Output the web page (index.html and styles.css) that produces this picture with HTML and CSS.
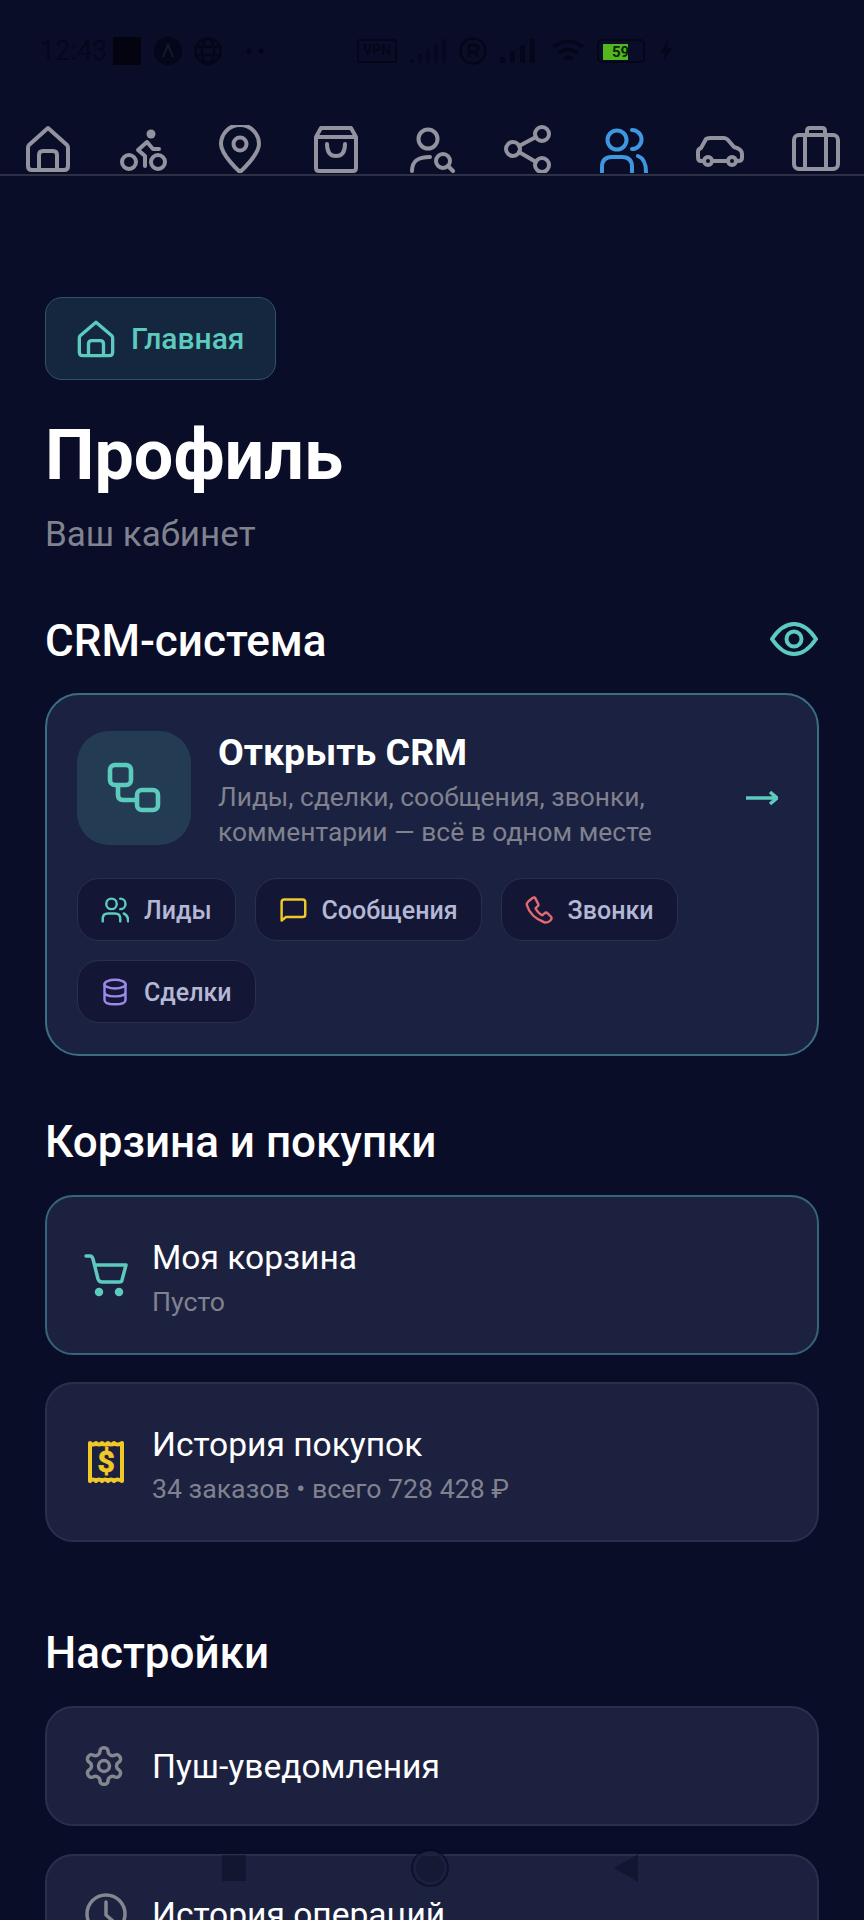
FILE: index.html
```html
<!DOCTYPE html>
<html lang="ru">
<head>
	<meta charset="UTF-8">
	<title>Профиль</title>
	<link rel="stylesheet" href="styles.css">
</head>
<body>
<!-- status bar -->
<div class="status">
	<span class="status-time">12:43</span>
	<span class="status-square"></span>
	<svg class="status-a" width="28" height="28" viewBox="0 0 28 28"><circle cx="14" cy="14" r="14" fill="#04061a"/><path d="M9 20 L14 8 L19 20" fill="none" stroke="#14172e" stroke-width="2"/></svg>
	<svg class="status-globe" width="28" height="28" viewBox="0 0 28 28" fill="none" stroke="#04061a" stroke-width="2.5"><circle cx="14" cy="14" r="12.5"/><ellipse cx="14" cy="14" rx="6" ry="12.5"/><path d="M2 10 H26 M2 18 H26"/></svg>
	<svg class="status-dots" width="18" height="6" viewBox="0 0 18 6" fill="#04061a"><circle cx="3" cy="3" r="2.5"/><circle cx="15" cy="3" r="2.5"/></svg>
	<span class="status-vpn">VPN</span>
	<svg class="status-signal" width="38" height="24" viewBox="0 0 38 24" fill="#04061a" opacity="0.7"><rect x="0" y="20" width="4" height="4"/><rect x="8" y="15" width="4" height="9"/><rect x="16" y="10" width="4" height="14"/><rect x="24" y="5" width="4" height="19"/><rect x="32" y="0" width="4" height="24"/></svg>
	<svg class="status-r" width="28" height="28" viewBox="0 0 28 28" fill="none" stroke="#04061a" stroke-width="2.5"><circle cx="14" cy="14" r="12.5"/><path d="M10 20 V8 H16 A3.5 3.5 0 0 1 16 15 H10 M15 15 L19 20"/></svg>
	<svg class="status-signal2" width="36" height="24" viewBox="0 0 36 24" fill="#04061a"><rect x="0" y="18" width="5" height="6"/><rect x="10" y="12" width="5" height="12"/><rect x="20" y="6" width="5" height="18"/><rect x="30" y="0" width="5" height="24"/></svg>
	<svg class="status-wifi" width="34" height="24" viewBox="0 0 34 24" fill="none" stroke="#04061a" stroke-width="3.5"><path d="M2 8 Q16 -3 31 8"/><path d="M7 14 Q16 7 26 14"/><path d="M12 20 Q16 17 21 20"/></svg>
	<span class="status-battery"><span class="battery-fill">59</span></span>
	<svg class="status-bolt" width="12" height="22" viewBox="0 0 12 22" fill="#04061a"><path d="M8 0 L0 13 H5 L3 22 L12 8 H7 Z"/></svg>
</div>

<!-- top tabs -->
<nav class="tabs">
	<svg class="tab" viewBox="0 0 48 48"><path d="M24 3 L5 20 Q4 21 4 23 V41 Q4 45 8 45 H40 Q44 45 44 41 V23 Q44 21 43 20 Z"/><path d="M15 45 V30 Q15 26 19 26 H29 Q33 26 33 30 V45"/></svg>
	<svg class="tab" viewBox="0 0 48 48"><circle cx="9" cy="37" r="7"/><circle cx="38" cy="37" r="7"/><circle class="tab-fill" cx="31" cy="9" r="4.5"/><path d="M27 17 L18 25 L25 31 V41 M27 17 L33 24 H39"/></svg>
	<svg class="tab" viewBox="0 0 48 48"><path d="M24 47 C24 47 5 30 5 19 A19 19 0 0 1 43 19 C43 30 24 47 24 47 Z"/><circle cx="24" cy="19" r="6.5"/></svg>
	<svg class="tab" viewBox="0 0 48 48"><path d="M4 12 L9 3 H39 L44 12 V43 Q44 46 41 46 H7 Q4 46 4 43 Z M4 12 H44"/><path d="M15 19 Q15 31 24 31 Q33 31 33 19"/></svg>
	<svg class="tab" viewBox="0 0 48 48"><circle cx="20" cy="14" r="9.5"/><path d="M4 46 C4 36 10 32 22 32"/><circle cx="35" cy="36" r="7"/><path d="M40 41 L45 46"/></svg>
	<svg class="tab" viewBox="0 0 48 48"><circle cx="38" cy="9" r="7"/><circle cx="9" cy="24" r="7"/><circle cx="38" cy="40" r="7"/><path d="M15 21 L32 12 M15 27 L32 37"/></svg>
	<svg class="tab tab-on" viewBox="0 0 48 48"><circle cx="17" cy="15" r="9.5"/><path d="M32 5 A9.5 9.5 0 0 1 32 24"/><path d="M2 47 V42 Q2 32 12 32 H22 Q32 32 32 42 V47"/><path d="M38 31 Q46 34 46 47"/></svg>
	<svg class="tab" viewBox="0 0 48 48"><path d="M8 36 H5 Q2 36 2 32 V27 Q2 24 5 23 L10 14 Q11 13 14 13 H28 Q30 13 32 15 L38 22 Q46 24 46 29 V33 Q46 36 42 36 H40 M16 36 H32"/><circle cx="12" cy="36" r="4"/><circle cx="36" cy="36" r="4"/></svg>
	<svg class="tab" viewBox="0 0 48 48"><rect x="2" y="10" width="44" height="34" rx="5"/><path d="M13 10 V44 M34 10 V44 M15 10 V6 Q15 3 18 3 H30 Q33 3 33 6 V10"/></svg>
</nav>

<section class="page">
	<a class="home-link">
		<svg class="home-icon" viewBox="0 0 48 48"><path d="M24 4 L5 20 Q4 21 4 23 V40 Q4 44 8 44 H40 Q44 44 44 40 V23 Q44 21 43 20 Z"/><path d="M15 44 V30 Q15 26 19 26 H29 Q33 26 33 30 V44"/></svg>
		Главная
	</a>
	<h1 class="page-title">Профиль</h1>
	<p class="page-sub">Ваш кабинет</p>

	<div class="section-head">
		<h2>CRM-система</h2>
		<svg class="eye" viewBox="0 0 48 36"><path d="M2 18 Q12 3 24 3 Q36 3 46 18 Q36 33 24 33 Q12 33 2 18 Z"/><circle cx="24" cy="18" r="7.5"/></svg>
	</div>

	<div class="crm">
		<div class="crm-top">
			<div class="crm-logo">
				<svg width="60" height="60" viewBox="0 0 60 60"><rect x="6" y="7" width="21" height="20" rx="5"/><rect x="33" y="32" width="21" height="20" rx="5"/><path d="M14 27 V37 Q14 42 19 42 H33"/></svg>
			</div>
			<div class="crm-text">
				<h3>Открыть CRM</h3>
				<p>Лиды, сделки, сообщения, звонки, комментарии — всё в одном месте</p>
			</div>
			<svg class="crm-arrow" width="32" height="20" viewBox="0 0 32 20"><path d="M0 10 H30 M24 4 L31 10 L24 16"/></svg>
		</div>
		<div class="chips">
			<span class="chip">
				<svg class="teal" viewBox="0 0 32 32"><circle cx="12" cy="9" r="6"/><path d="M22 3 A6 6 0 0 1 22 15"/><path d="M2 29 V26 Q2 20 8 20 H16 Q22 20 22 26 V29"/><path d="M26 20 Q31 22 31 29"/></svg>
				<span class="chip-label">Лиды</span>
			</span>
			<span class="chip">
				<svg class="yellow" viewBox="0 0 32 32"><path d="M3 28 V7 Q3 4 6 4 H27 Q30 4 30 7 V21 Q30 24 27 24 H8 Z"/></svg>
				<span class="chip-label">Сообщения</span>
			</span>
			<span class="chip">
				<svg class="red" viewBox="0 0 32 32"><path d="M4 6 L9 2 Q11 1 12 3 L15 9 Q16 11 14 12 L12 14 Q15 20 20 22 L22 20 Q24 18 26 20 L30 24 Q31 26 29 28 Q26 31 22 30 Q6 24 2 10 Q2 8 4 6 Z"/></svg>
				<span class="chip-label">Звонки</span>
			</span>
			<span class="chip">
				<svg class="purple" viewBox="0 0 32 32"><ellipse cx="16" cy="7" rx="12" ry="5"/><path d="M4 7 V25 Q4 30 16 30 Q28 30 28 25 V7 M4 16 Q4 21 16 21 Q28 21 28 16"/></svg>
				<span class="chip-label">Сделки</span>
			</span>
		</div>
	</div>

	<h2 class="buy-title">Корзина и покупки</h2>
	<div class="row row-lit">
		<svg class="row-icon teal" viewBox="0 0 44 44"><path d="M2 3 H6 Q8 3 9 6 L14 26 Q15 29 18 29 H35 Q38 29 38 27 L42 12 H11"/><circle class="dot" cx="15" cy="39" r="2.5"/><circle class="dot" cx="35" cy="39" r="2.5"/></svg>
		<div class="row-body">
			<div class="row-title">Моя корзина</div>
			<div class="row-sub">Пусто</div>
		</div>
	</div>
	<div class="row">
		<svg class="row-icon yellow receipt" viewBox="0 0 44 44"><path d="M6 3 Q9 6 12 3 Q15 6 18 3 Q21 6 24 3 Q27 6 30 3 Q33 6 38 3 V41 Q33 38 30 41 Q27 38 24 41 Q21 38 18 41 Q15 38 12 41 Q9 38 6 41 Z"/><text class="receipt-sign" x="22" y="32" text-anchor="middle">$</text></svg>
		<div class="row-body">
			<div class="row-title">История покупок</div>
			<div class="row-sub">34 заказов • всего 728 428 ₽</div>
		</div>
	</div>

	<h2 class="set-title">Настройки</h2>
	<div class="row row-short">
		<svg class="row-icon gray gear" viewBox="0 0 24 24"><path d="M12.22 2h-.44a2 2 0 0 0-2 2v.18a2 2 0 0 1-1 1.73l-.43.25a2 2 0 0 1-2 0l-.15-.08a2 2 0 0 0-2.73.73l-.22.38a2 2 0 0 0 .73 2.73l.15.1a2 2 0 0 1 1 1.72v.51a2 2 0 0 1-1 1.74l-.15.09a2 2 0 0 0-.73 2.73l.22.38a2 2 0 0 0 2.73.73l.15-.08a2 2 0 0 1 2 0l.43.25a2 2 0 0 1 1 1.73V20a2 2 0 0 0 2 2h.44a2 2 0 0 0 2-2v-.18a2 2 0 0 1 1-1.73l.43-.25a2 2 0 0 1 2 0l.15.08a2 2 0 0 0 2.73-.73l.22-.39a2 2 0 0 0-.73-2.73l-.15-.08a2 2 0 0 1-1-1.74v-.5a2 2 0 0 1 1-1.74l.15-.09a2 2 0 0 0 .73-2.73l-.22-.38a2 2 0 0 0-2.73-.73l-.15.08a2 2 0 0 1-2 0l-.43-.25a2 2 0 0 1-1-1.73V4a2 2 0 0 0-2-2z"/><circle cx="12" cy="12" r="3"/></svg>
		<div class="row-title row-single">Пуш-уведомления</div>
	</div>
	<div class="row row-short">
		<svg class="row-icon gray" viewBox="0 0 44 44"><circle cx="22" cy="22" r="19"/><path d="M22 10 V23 L30 30"/></svg>
		<div class="row-title row-single">История операций</div>
	</div>
</section>

<!-- system buttons, drawn over the page -->
<div class="sysnav">
	<span class="sys-square"></span>
	<span class="sys-circle"></span>
	<span class="sys-back"></span>
</div>
</body>
</html>
```

FILE: styles.css
```css
* {
	box-sizing: border-box;
}

body, h1, h2, h3, p {
	margin: 0;
	padding: 0;
}

body {
	position: relative;
	width: 864px;
	height: 1920px;
	overflow: hidden;
	background: #0a0d28;
	color: #fff;
	font-family: Roboto, "Noto Sans", sans-serif;
}

/* status bar */
.status {
	display: flex;
	align-items: center;
	height: 102px;
	padding: 0 0 0 40px;
}

.status-time {
	width: 66px;
	color: #05071b;
	font-size: 27px;
	white-space: nowrap;
}

.status-square {
	width: 28px;
	height: 28px;
	margin-left: 7px;
	background: #03040f;
}

.status-a { margin-left: 13px; }
.status-globe { margin-left: 12px; }
.status-dots { margin-left: 24px; }

.status-vpn {
	width: 40px;
	height: 24px;
	margin-left: 93px;
	border: 2.5px solid #04061a;
	border-radius: 3px;
	color: #04061a;
	font-size: 14px;
	font-weight: 700;
	line-height: 19px;
	text-align: center;
}

.status-signal { margin-left: 13px; }
.status-r { margin-left: 11px; }
.status-signal2 { margin-left: 13px; }
.status-wifi { margin-left: 16px; }

.status-battery {
	display: block;
	width: 48px;
	height: 24px;
	margin-left: 11px;
	padding: 3px 0 0 4px;
	border: 2px solid #04061a;
	border-radius: 5px;
}

.battery-fill {
	display: block;
	width: 25px;
	height: 16px;
	padding-left: 9px;
	overflow: hidden;
	background: #54b81c;
	color: #04240a;
	font-size: 15px;
	font-weight: 700;
	line-height: 16px;
	white-space: nowrap;
}

.status-bolt { margin-left: 15px; }

/* tabs */
.tabs {
	display: grid;
	grid-template-columns: repeat(9, 96px);
	justify-items: center;
	height: 74px;
	padding-top: 23px;
	border-bottom: 2px solid #2d3044;
}

.tab {
	width: 48px;
	height: 48px;
	fill: none;
	stroke: #92939f;
	stroke-width: 4;
	stroke-linecap: round;
	stroke-linejoin: round;
}

.tab-fill {
	fill: #92939f;
	stroke: none;
}

.tab-on {
	stroke: #3f97e0;
}

/* page */
.page {
	padding: 121px 45px 0;
}

.home-link {
	display: inline-flex;
	align-items: center;
	gap: 15px;
	height: 83px;
	padding: 0 31px 0 30px;
	border: 1.5px solid #2e5560;
	border-radius: 17px;
	background: #14273f;
	color: #5ccabd;
	font-size: 30px;
	font-weight: 500;
}

.home-icon {
	width: 40px;
	height: 40px;
	fill: none;
	stroke: #5ccabd;
	stroke-width: 4;
	stroke-linejoin: round;
}

.page-title {
	margin-top: 33px;
	font-size: 70px;
	font-weight: 700;
	line-height: 84px;
}

.page-sub {
	margin-top: 16px;
	color: #80828f;
	font-size: 35px;
	line-height: 44px;
}

.section-head {
	display: flex;
	align-items: center;
	justify-content: space-between;
	margin-top: 58px;
}

h2 {
	font-size: 44px;
	font-weight: 500;
	line-height: 52px;
}

.eye {
	width: 48px;
	height: 36px;
	margin: 0 1px 5px 0;
	fill: none;
	stroke: #5ccabd;
	stroke-width: 4;
}

/* crm card */
.crm {
	height: 363px;
	margin-top: 26px;
	padding: 36px 30px 0;
	border: 2px solid #3a6f82;
	border-radius: 34px;
	background: #1b2140;
}

.crm-top {
	display: flex;
	align-items: flex-start;
}

.crm-logo {
	display: flex;
	align-items: center;
	justify-content: center;
	flex: none;
	width: 114px;
	height: 114px;
	border-radius: 32px;
	background: #233c54;
}

.crm-logo svg {
	fill: none;
	stroke: #5ccabd;
	stroke-width: 4.6;
}

.crm-text {
	width: 480px;
	margin: -1px 0 0 27px;
}

.crm-text h3 {
	font-size: 37.5px;
	font-weight: 700;
	line-height: 44px;
}

.crm-text p {
	margin-top: 6px;
	color: #80828f;
	font-size: 26.4px;
	line-height: 35px;
}

.crm-arrow {
	flex: none;
	margin: 57px 9px 0 auto;
	fill: none;
	stroke: #5ccabd;
	stroke-width: 3.5;
}

.chips {
	display: flex;
	flex-wrap: wrap;
	gap: 19px;
	margin-top: 28px;
}

.chip {
	display: flex;
	align-items: center;
	gap: 15px;
	height: 63px;
	padding: 0 23px;
	border: 1.5px solid #2a2f4c;
	border-radius: 22px;
	background: #131735;
	color: #b4b8d4;
	font-size: 25px;
	font-weight: 500;
}

.chip-label {
	padding-top: 2px;
}

.chip svg {
	width: 28px;
	height: 28px;
	fill: none;
	stroke-width: 2.8;
	stroke-linecap: round;
	stroke-linejoin: round;
}

.teal { stroke: #5ccabd; }
.yellow { stroke: #f0c828; }
.red { stroke: #e26a70; }
.purple { stroke: #9c88ea; }
.gray { stroke: #85878f; }

/* list rows */
.buy-title {
	margin-top: 60px;
}

.set-title {
	margin-top: 85px;
}

.row {
	display: flex;
	align-items: center;
	gap: 24px;
	height: 160px;
	margin-top: 27px;
	padding: 0 37px;
	border: 2px solid #2a2f4c;
	border-radius: 28px;
	background: #1c2140;
}

.row-lit {
	border-color: #36647a;
}

.row-short {
	height: 120px;
	margin-top: 28px;
}

.set-title + .row {
	margin-top: 27px;
}

.row-icon {
	flex: none;
	width: 44px;
	height: 44px;
	fill: none;
	stroke-width: 3.5;
	stroke-linecap: round;
	stroke-linejoin: round;
}

.gear {
	margin: 0 2px 0 -2px;
	stroke-width: 1.9;
}

.receipt {
	stroke-width: 4;
}

.dot {
	fill: #5ccabd;
}

.receipt-sign {
	fill: #f0c828;
	stroke: #f0c828;
	stroke-width: 0.8;
	font-size: 30px;
	font-weight: 700;
}

.row-body {
	padding-top: 6px;
}

.row-title {
	font-size: 33.6px;
	line-height: 42px;
}

.row-single {
	padding-top: 2px;
}

.row-sub {
	margin-top: 6px;
	color: #80828f;
	font-size: 26.7px;
	line-height: 34px;
}

/* system buttons */
.sysnav {
	position: absolute;
	left: 222px;
	top: 1850px;
	display: flex;
	align-items: center;
	width: 416px;
	height: 36px;
	justify-content: space-between;
}

.sys-square {
	width: 24px;
	height: 26px;
	background: rgba(6, 8, 28, 0.45);
}

.sys-circle {
	width: 38px;
	height: 38px;
	border-radius: 50%;
	background: rgba(6, 8, 28, 0.3);
	border: 2px solid rgba(6, 8, 28, 0.45);
	box-shadow: inset 0 0 0 3px #1a2040;
}

.sys-back {
	width: 0;
	height: 0;
	border-top: 14px solid transparent;
	border-bottom: 14px solid transparent;
	border-right: 24px solid rgba(6, 8, 28, 0.45);
}
```
